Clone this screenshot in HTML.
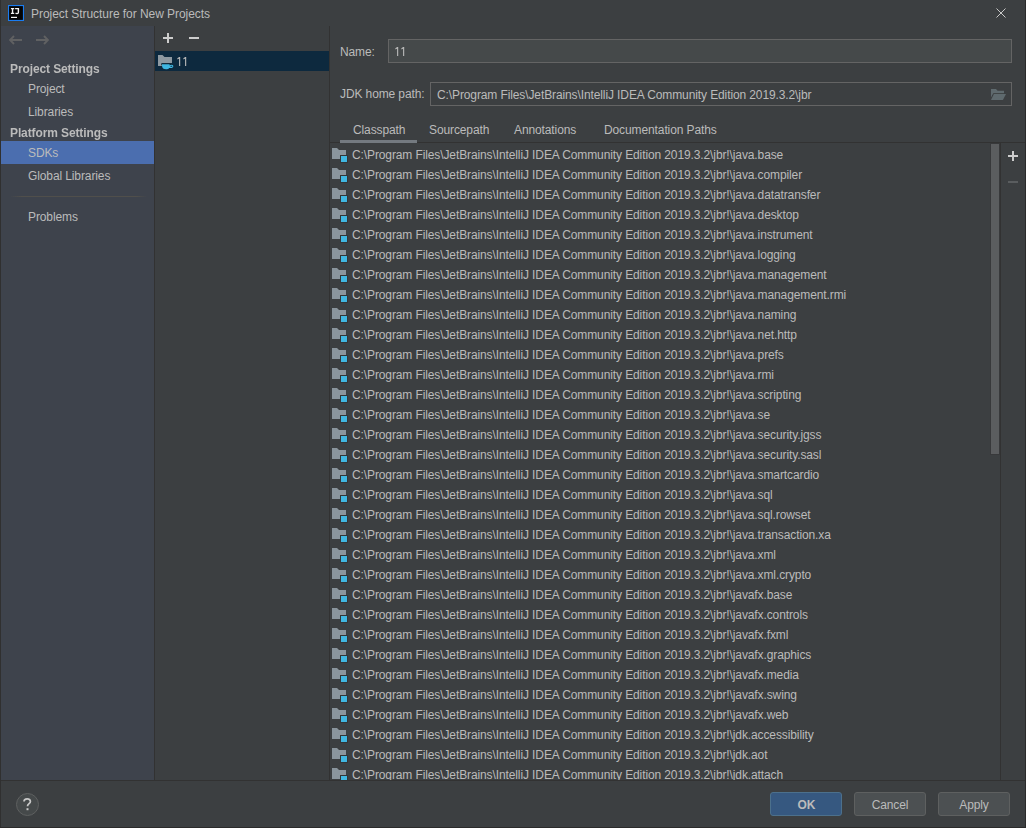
<!DOCTYPE html>
<html><head><meta charset="utf-8"><style>
*{margin:0;padding:0;box-sizing:border-box}
html,body{width:1026px;height:828px;overflow:hidden;background:#3C3F41}
body{position:relative;font-family:"Liberation Sans",sans-serif;font-size:12px;color:#BBBBBB;letter-spacing:-0.11px}
.abs{position:absolute}
.bl{position:absolute;left:0;top:0;width:1px;height:828px;background:#303030}
.br{position:absolute;right:0;top:0;width:1px;height:828px;background:#2B2B2B}
.bb{position:absolute;left:0;bottom:0;width:1026px;height:1px;background:#2B2B2B}
.title{position:absolute;left:31px;top:6px;line-height:16px;font-size:12px;color:#BBBBBB;letter-spacing:-0.05px}
.side{position:absolute;left:1px;top:26px;width:153px;height:754px;background:#3E434C}
.vdiv1{position:absolute;left:154px;top:26px;width:1px;height:754px;background:#323232}
.vdiv2{position:absolute;left:329px;top:26px;width:1px;height:754px;background:#323232}
.hdiv{position:absolute;left:1px;top:780px;width:1024px;height:1px;background:#323232}
.sh{position:absolute;left:10px;font-weight:bold;line-height:16px;will-change:transform}
.si{position:absolute;left:28px;line-height:16px}
.sel{position:absolute;left:1px;top:141px;width:153px;height:23px;background:#4B6EAF}
.sep{position:absolute;left:10px;top:196px;width:137px;height:1px;background:linear-gradient(to right,rgba(80,80,76,0) 0px,#504F4B 12px,#504F4B 126px,rgba(80,80,76,0) 137px)}
.mid-sel{position:absolute;left:155px;top:51px;width:174px;height:20px;background:#0D293E}
.lbl{position:absolute;line-height:16px}
.field{position:absolute;border:1px solid #646464}
.tab{position:absolute;top:122px;line-height:16px}
.list{position:absolute;left:330px;top:143px;width:660px;height:637px;overflow:hidden}
.row{position:absolute;left:0;height:20px;width:660px;white-space:nowrap}
.fi{position:absolute;left:2px;top:4px}
.row .t{position:absolute;left:22px;top:4px;line-height:16px}
.btn{position:absolute;top:792px;width:72px;height:24px;border:1px solid #5E6060;background:#4C5052;border-radius:3px;text-align:center;line-height:22px;padding-top:1px}
</style></head><body>
<div class="bl"></div><div class="br"></div><div class="bb"></div>
<svg class="abs" style="left:8px;top:5px" width="16" height="16" viewBox="0 0 32 32"><rect x="0" y="0" width="32" height="32" fill="#1A7CF0"/><rect x="2.2" y="2.2" width="27.6" height="27.6" fill="#050403"/><path d="M5.8 5.8h6.6v2.6h-1.9v7h1.9v2.6h-6.6v-2.6h1.9v-7h-1.9z" fill="#F4F4F4"/><path d="M14.2 5.8h8v8.8c0 2.6-1.6 3.8-4.1 3.8c-1.7 0-3-.7-3.8-1.6l1.5-1.8c.6.6 1.3 1 2 1c.9 0 1.5-.5 1.5-1.7v-5.9h-5.1z" fill="#F4F4F4"/><rect x="6" y="23.6" width="12" height="2.4" fill="#F4F4F4"/></svg>
<div class="title">Project Structure for New Projects</div>
<svg class="abs" style="left:996px;top:8px" width="10" height="10" viewBox="0 0 10 10"><path d="M0.5 0.5L9.5 9.5M9.5 0.5L0.5 9.5" stroke="#C8C8C8" stroke-width="1"/></svg>

<div class="side"></div>
<div class="vdiv1"></div><div class="vdiv2"></div><div class="hdiv"></div>
<svg class="abs" style="left:9px;top:35px" width="13" height="10" viewBox="0 0 13 10"><path d="M5 1L1 5L5 9M1 5H13" stroke="#606162" stroke-width="1.9" fill="none"/></svg>
<svg class="abs" style="left:36px;top:35px" width="13" height="10" viewBox="0 0 13 10"><path d="M8 1L12 5L8 9M12 5H0" stroke="#606162" stroke-width="1.9" fill="none"/></svg>
<div class="sh" style="top:61px">Project Settings</div>
<div class="si" style="top:81px">Project</div>
<div class="si" style="top:104px">Libraries</div>
<div class="sh" style="top:125px">Platform Settings</div>
<div class="sel"></div>
<div class="si" style="top:145px">SDKs</div>
<div class="si" style="top:168px">Global Libraries</div>
<div class="sep"></div>
<div class="si" style="top:209px">Problems</div>

<div class="abs" style="left:167px;top:33px;width:2px;height:10px;background:#CDCDCD"></div><div class="abs" style="left:163px;top:37px;width:10px;height:2px;background:#CDCDCD"></div>
<div class="abs" style="left:189px;top:37px;width:10px;height:2px;background:#CDCDCD"></div>
<div class="mid-sel"></div>
<svg class="abs" style="left:155px;top:51px" width="40" height="20" viewBox="155 51 40 20"><path d="M158 55h4.5l2 2h7.5v6.3h-10.2v2.7h-3.8z" fill="#8E99A1"/><path d="M161.3 63.3h10.7v1.6h-10.7z" fill="#0A1F2E"/><path d="M162 64.2h7.6v1.2c.4-.5 1.2-.7 2-.6c1.2.1 1.8.8 1.7 1.6c-.1.9-1 1.5-2.2 1.5h-1.9c-.7 1-1.8 1.4-3.1 1.4c-2.4 0-4.1-1.3-4.1-3.6z" fill="#40B6E0"/><ellipse cx="171.3" cy="66.3" rx="1" ry=".5" fill="#0D293E"/><path d="M177.3 58.3L179.2 57.1H180.2V66H179.1V58.6L177.6 59.4z" fill="#BBBBBB"/><path d="M183.3 58.3L185.2 57.1H186.2V66H185.1V58.6L183.6 59.4z" fill="#BBBBBB"/></svg>

<div class="lbl" style="left:340px;top:44px">Name:</div>
<div class="field" style="left:388px;top:39px;width:624px;height:24px;background:#45494A"></div>
<svg class="abs" style="left:390px;top:44px" width="20" height="16" viewBox="390 44 20 16"><path d="M395.3 48.3L397.2 47.1H398.2V56H397.1V48.6L395.6 49.4z" fill="#BBBBBB"/><path d="M401.3 48.3L403.2 47.1H404.2V56H403.1V48.6L401.6 49.4z" fill="#BBBBBB"/></svg>
<div class="lbl" style="left:340px;top:86px">JDK home path:</div>
<div class="field" style="left:430px;top:82px;width:582px;height:24px"></div>
<div class="lbl" style="left:437px;top:87px">C:\Program Files\JetBrains\IntelliJ IDEA Community Edition 2019.3.2\jbr</div>
<svg class="abs" style="left:986px;top:84px" width="24" height="20" viewBox="986 84 24 20"><path d="M991 89H996L997.6 90.7H1004V93.2H993.2L991 97.6Z" fill="#5F6A6E"/><path d="M993.9 94.1H1006L1002.9 100H991Z" fill="#5F6A6E" stroke="#3C3F41" stroke-width="0.9" paint-order="stroke"/></svg>

<div class="tab" style="left:353px">Classpath</div>
<div class="tab" style="left:429px">Sourcepath</div>
<div class="tab" style="left:514px">Annotations</div>
<div class="tab" style="left:604px">Documentation Paths</div>
<div class="abs" style="left:330px;top:142px;width:695px;height:1px;background:#323232"></div>
<div class="abs" style="left:340px;top:140px;width:77px;height:3px;background:#747A80"></div>

<div class="list">
<div class="row" style="top:0px"><svg class="fi" width="16" height="16" viewBox="0 0 16 16"><path d="M0 1h5l2 2h7v5h-6v4h-8z" fill="#8A959D"/><rect x="8" y="8" width="8" height="8" fill="#323436"/><rect x="9" y="9" width="6" height="6" fill="#40B6E0"/></svg><span class="t">C:\Program Files\JetBrains\IntelliJ IDEA Community Edition 2019.3.2\jbr!\java.base</span></div>
<div class="row" style="top:20px"><svg class="fi" width="16" height="16" viewBox="0 0 16 16"><path d="M0 1h5l2 2h7v5h-6v4h-8z" fill="#8A959D"/><rect x="8" y="8" width="8" height="8" fill="#323436"/><rect x="9" y="9" width="6" height="6" fill="#40B6E0"/></svg><span class="t">C:\Program Files\JetBrains\IntelliJ IDEA Community Edition 2019.3.2\jbr!\java.compiler</span></div>
<div class="row" style="top:40px"><svg class="fi" width="16" height="16" viewBox="0 0 16 16"><path d="M0 1h5l2 2h7v5h-6v4h-8z" fill="#8A959D"/><rect x="8" y="8" width="8" height="8" fill="#323436"/><rect x="9" y="9" width="6" height="6" fill="#40B6E0"/></svg><span class="t">C:\Program Files\JetBrains\IntelliJ IDEA Community Edition 2019.3.2\jbr!\java.datatransfer</span></div>
<div class="row" style="top:60px"><svg class="fi" width="16" height="16" viewBox="0 0 16 16"><path d="M0 1h5l2 2h7v5h-6v4h-8z" fill="#8A959D"/><rect x="8" y="8" width="8" height="8" fill="#323436"/><rect x="9" y="9" width="6" height="6" fill="#40B6E0"/></svg><span class="t">C:\Program Files\JetBrains\IntelliJ IDEA Community Edition 2019.3.2\jbr!\java.desktop</span></div>
<div class="row" style="top:80px"><svg class="fi" width="16" height="16" viewBox="0 0 16 16"><path d="M0 1h5l2 2h7v5h-6v4h-8z" fill="#8A959D"/><rect x="8" y="8" width="8" height="8" fill="#323436"/><rect x="9" y="9" width="6" height="6" fill="#40B6E0"/></svg><span class="t">C:\Program Files\JetBrains\IntelliJ IDEA Community Edition 2019.3.2\jbr!\java.instrument</span></div>
<div class="row" style="top:100px"><svg class="fi" width="16" height="16" viewBox="0 0 16 16"><path d="M0 1h5l2 2h7v5h-6v4h-8z" fill="#8A959D"/><rect x="8" y="8" width="8" height="8" fill="#323436"/><rect x="9" y="9" width="6" height="6" fill="#40B6E0"/></svg><span class="t">C:\Program Files\JetBrains\IntelliJ IDEA Community Edition 2019.3.2\jbr!\java.logging</span></div>
<div class="row" style="top:120px"><svg class="fi" width="16" height="16" viewBox="0 0 16 16"><path d="M0 1h5l2 2h7v5h-6v4h-8z" fill="#8A959D"/><rect x="8" y="8" width="8" height="8" fill="#323436"/><rect x="9" y="9" width="6" height="6" fill="#40B6E0"/></svg><span class="t">C:\Program Files\JetBrains\IntelliJ IDEA Community Edition 2019.3.2\jbr!\java.management</span></div>
<div class="row" style="top:140px"><svg class="fi" width="16" height="16" viewBox="0 0 16 16"><path d="M0 1h5l2 2h7v5h-6v4h-8z" fill="#8A959D"/><rect x="8" y="8" width="8" height="8" fill="#323436"/><rect x="9" y="9" width="6" height="6" fill="#40B6E0"/></svg><span class="t">C:\Program Files\JetBrains\IntelliJ IDEA Community Edition 2019.3.2\jbr!\java.management.rmi</span></div>
<div class="row" style="top:160px"><svg class="fi" width="16" height="16" viewBox="0 0 16 16"><path d="M0 1h5l2 2h7v5h-6v4h-8z" fill="#8A959D"/><rect x="8" y="8" width="8" height="8" fill="#323436"/><rect x="9" y="9" width="6" height="6" fill="#40B6E0"/></svg><span class="t">C:\Program Files\JetBrains\IntelliJ IDEA Community Edition 2019.3.2\jbr!\java.naming</span></div>
<div class="row" style="top:180px"><svg class="fi" width="16" height="16" viewBox="0 0 16 16"><path d="M0 1h5l2 2h7v5h-6v4h-8z" fill="#8A959D"/><rect x="8" y="8" width="8" height="8" fill="#323436"/><rect x="9" y="9" width="6" height="6" fill="#40B6E0"/></svg><span class="t">C:\Program Files\JetBrains\IntelliJ IDEA Community Edition 2019.3.2\jbr!\java.net.http</span></div>
<div class="row" style="top:200px"><svg class="fi" width="16" height="16" viewBox="0 0 16 16"><path d="M0 1h5l2 2h7v5h-6v4h-8z" fill="#8A959D"/><rect x="8" y="8" width="8" height="8" fill="#323436"/><rect x="9" y="9" width="6" height="6" fill="#40B6E0"/></svg><span class="t">C:\Program Files\JetBrains\IntelliJ IDEA Community Edition 2019.3.2\jbr!\java.prefs</span></div>
<div class="row" style="top:220px"><svg class="fi" width="16" height="16" viewBox="0 0 16 16"><path d="M0 1h5l2 2h7v5h-6v4h-8z" fill="#8A959D"/><rect x="8" y="8" width="8" height="8" fill="#323436"/><rect x="9" y="9" width="6" height="6" fill="#40B6E0"/></svg><span class="t">C:\Program Files\JetBrains\IntelliJ IDEA Community Edition 2019.3.2\jbr!\java.rmi</span></div>
<div class="row" style="top:240px"><svg class="fi" width="16" height="16" viewBox="0 0 16 16"><path d="M0 1h5l2 2h7v5h-6v4h-8z" fill="#8A959D"/><rect x="8" y="8" width="8" height="8" fill="#323436"/><rect x="9" y="9" width="6" height="6" fill="#40B6E0"/></svg><span class="t">C:\Program Files\JetBrains\IntelliJ IDEA Community Edition 2019.3.2\jbr!\java.scripting</span></div>
<div class="row" style="top:260px"><svg class="fi" width="16" height="16" viewBox="0 0 16 16"><path d="M0 1h5l2 2h7v5h-6v4h-8z" fill="#8A959D"/><rect x="8" y="8" width="8" height="8" fill="#323436"/><rect x="9" y="9" width="6" height="6" fill="#40B6E0"/></svg><span class="t">C:\Program Files\JetBrains\IntelliJ IDEA Community Edition 2019.3.2\jbr!\java.se</span></div>
<div class="row" style="top:280px"><svg class="fi" width="16" height="16" viewBox="0 0 16 16"><path d="M0 1h5l2 2h7v5h-6v4h-8z" fill="#8A959D"/><rect x="8" y="8" width="8" height="8" fill="#323436"/><rect x="9" y="9" width="6" height="6" fill="#40B6E0"/></svg><span class="t">C:\Program Files\JetBrains\IntelliJ IDEA Community Edition 2019.3.2\jbr!\java.security.jgss</span></div>
<div class="row" style="top:300px"><svg class="fi" width="16" height="16" viewBox="0 0 16 16"><path d="M0 1h5l2 2h7v5h-6v4h-8z" fill="#8A959D"/><rect x="8" y="8" width="8" height="8" fill="#323436"/><rect x="9" y="9" width="6" height="6" fill="#40B6E0"/></svg><span class="t">C:\Program Files\JetBrains\IntelliJ IDEA Community Edition 2019.3.2\jbr!\java.security.sasl</span></div>
<div class="row" style="top:320px"><svg class="fi" width="16" height="16" viewBox="0 0 16 16"><path d="M0 1h5l2 2h7v5h-6v4h-8z" fill="#8A959D"/><rect x="8" y="8" width="8" height="8" fill="#323436"/><rect x="9" y="9" width="6" height="6" fill="#40B6E0"/></svg><span class="t">C:\Program Files\JetBrains\IntelliJ IDEA Community Edition 2019.3.2\jbr!\java.smartcardio</span></div>
<div class="row" style="top:340px"><svg class="fi" width="16" height="16" viewBox="0 0 16 16"><path d="M0 1h5l2 2h7v5h-6v4h-8z" fill="#8A959D"/><rect x="8" y="8" width="8" height="8" fill="#323436"/><rect x="9" y="9" width="6" height="6" fill="#40B6E0"/></svg><span class="t">C:\Program Files\JetBrains\IntelliJ IDEA Community Edition 2019.3.2\jbr!\java.sql</span></div>
<div class="row" style="top:360px"><svg class="fi" width="16" height="16" viewBox="0 0 16 16"><path d="M0 1h5l2 2h7v5h-6v4h-8z" fill="#8A959D"/><rect x="8" y="8" width="8" height="8" fill="#323436"/><rect x="9" y="9" width="6" height="6" fill="#40B6E0"/></svg><span class="t">C:\Program Files\JetBrains\IntelliJ IDEA Community Edition 2019.3.2\jbr!\java.sql.rowset</span></div>
<div class="row" style="top:380px"><svg class="fi" width="16" height="16" viewBox="0 0 16 16"><path d="M0 1h5l2 2h7v5h-6v4h-8z" fill="#8A959D"/><rect x="8" y="8" width="8" height="8" fill="#323436"/><rect x="9" y="9" width="6" height="6" fill="#40B6E0"/></svg><span class="t">C:\Program Files\JetBrains\IntelliJ IDEA Community Edition 2019.3.2\jbr!\java.transaction.xa</span></div>
<div class="row" style="top:400px"><svg class="fi" width="16" height="16" viewBox="0 0 16 16"><path d="M0 1h5l2 2h7v5h-6v4h-8z" fill="#8A959D"/><rect x="8" y="8" width="8" height="8" fill="#323436"/><rect x="9" y="9" width="6" height="6" fill="#40B6E0"/></svg><span class="t">C:\Program Files\JetBrains\IntelliJ IDEA Community Edition 2019.3.2\jbr!\java.xml</span></div>
<div class="row" style="top:420px"><svg class="fi" width="16" height="16" viewBox="0 0 16 16"><path d="M0 1h5l2 2h7v5h-6v4h-8z" fill="#8A959D"/><rect x="8" y="8" width="8" height="8" fill="#323436"/><rect x="9" y="9" width="6" height="6" fill="#40B6E0"/></svg><span class="t">C:\Program Files\JetBrains\IntelliJ IDEA Community Edition 2019.3.2\jbr!\java.xml.crypto</span></div>
<div class="row" style="top:440px"><svg class="fi" width="16" height="16" viewBox="0 0 16 16"><path d="M0 1h5l2 2h7v5h-6v4h-8z" fill="#8A959D"/><rect x="8" y="8" width="8" height="8" fill="#323436"/><rect x="9" y="9" width="6" height="6" fill="#40B6E0"/></svg><span class="t">C:\Program Files\JetBrains\IntelliJ IDEA Community Edition 2019.3.2\jbr!\javafx.base</span></div>
<div class="row" style="top:460px"><svg class="fi" width="16" height="16" viewBox="0 0 16 16"><path d="M0 1h5l2 2h7v5h-6v4h-8z" fill="#8A959D"/><rect x="8" y="8" width="8" height="8" fill="#323436"/><rect x="9" y="9" width="6" height="6" fill="#40B6E0"/></svg><span class="t">C:\Program Files\JetBrains\IntelliJ IDEA Community Edition 2019.3.2\jbr!\javafx.controls</span></div>
<div class="row" style="top:480px"><svg class="fi" width="16" height="16" viewBox="0 0 16 16"><path d="M0 1h5l2 2h7v5h-6v4h-8z" fill="#8A959D"/><rect x="8" y="8" width="8" height="8" fill="#323436"/><rect x="9" y="9" width="6" height="6" fill="#40B6E0"/></svg><span class="t">C:\Program Files\JetBrains\IntelliJ IDEA Community Edition 2019.3.2\jbr!\javafx.fxml</span></div>
<div class="row" style="top:500px"><svg class="fi" width="16" height="16" viewBox="0 0 16 16"><path d="M0 1h5l2 2h7v5h-6v4h-8z" fill="#8A959D"/><rect x="8" y="8" width="8" height="8" fill="#323436"/><rect x="9" y="9" width="6" height="6" fill="#40B6E0"/></svg><span class="t">C:\Program Files\JetBrains\IntelliJ IDEA Community Edition 2019.3.2\jbr!\javafx.graphics</span></div>
<div class="row" style="top:520px"><svg class="fi" width="16" height="16" viewBox="0 0 16 16"><path d="M0 1h5l2 2h7v5h-6v4h-8z" fill="#8A959D"/><rect x="8" y="8" width="8" height="8" fill="#323436"/><rect x="9" y="9" width="6" height="6" fill="#40B6E0"/></svg><span class="t">C:\Program Files\JetBrains\IntelliJ IDEA Community Edition 2019.3.2\jbr!\javafx.media</span></div>
<div class="row" style="top:540px"><svg class="fi" width="16" height="16" viewBox="0 0 16 16"><path d="M0 1h5l2 2h7v5h-6v4h-8z" fill="#8A959D"/><rect x="8" y="8" width="8" height="8" fill="#323436"/><rect x="9" y="9" width="6" height="6" fill="#40B6E0"/></svg><span class="t">C:\Program Files\JetBrains\IntelliJ IDEA Community Edition 2019.3.2\jbr!\javafx.swing</span></div>
<div class="row" style="top:560px"><svg class="fi" width="16" height="16" viewBox="0 0 16 16"><path d="M0 1h5l2 2h7v5h-6v4h-8z" fill="#8A959D"/><rect x="8" y="8" width="8" height="8" fill="#323436"/><rect x="9" y="9" width="6" height="6" fill="#40B6E0"/></svg><span class="t">C:\Program Files\JetBrains\IntelliJ IDEA Community Edition 2019.3.2\jbr!\javafx.web</span></div>
<div class="row" style="top:580px"><svg class="fi" width="16" height="16" viewBox="0 0 16 16"><path d="M0 1h5l2 2h7v5h-6v4h-8z" fill="#8A959D"/><rect x="8" y="8" width="8" height="8" fill="#323436"/><rect x="9" y="9" width="6" height="6" fill="#40B6E0"/></svg><span class="t">C:\Program Files\JetBrains\IntelliJ IDEA Community Edition 2019.3.2\jbr!\jdk.accessibility</span></div>
<div class="row" style="top:600px"><svg class="fi" width="16" height="16" viewBox="0 0 16 16"><path d="M0 1h5l2 2h7v5h-6v4h-8z" fill="#8A959D"/><rect x="8" y="8" width="8" height="8" fill="#323436"/><rect x="9" y="9" width="6" height="6" fill="#40B6E0"/></svg><span class="t">C:\Program Files\JetBrains\IntelliJ IDEA Community Edition 2019.3.2\jbr!\jdk.aot</span></div>
<div class="row" style="top:620px"><svg class="fi" width="16" height="16" viewBox="0 0 16 16"><path d="M0 1h5l2 2h7v5h-6v4h-8z" fill="#8A959D"/><rect x="8" y="8" width="8" height="8" fill="#323436"/><rect x="9" y="9" width="6" height="6" fill="#40B6E0"/></svg><span class="t">C:\Program Files\JetBrains\IntelliJ IDEA Community Edition 2019.3.2\jbr!\jdk.attach</span></div>
</div>
<div class="abs" style="left:990px;top:143px;width:10px;height:312px;background:#38393B"></div><div class="abs" style="left:991px;top:144px;width:8px;height:310px;background:#5B5D5F"></div>
<div class="abs" style="left:1000px;top:143px;width:1px;height:637px;background:#323232"></div>
<div class="abs" style="left:1012px;top:151px;width:2px;height:10px;background:#CDCDCD"></div><div class="abs" style="left:1008px;top:155px;width:10px;height:2px;background:#CDCDCD"></div>
<svg class="abs" style="left:1008px;top:181px" width="10" height="2" viewBox="0 0 10 2"><path d="M0 1H10" stroke="#5A5D5F" stroke-width="2"/></svg>

<svg class="abs" style="left:15px;top:792px" width="25" height="25" viewBox="15 792 25 25"><circle cx="27.5" cy="804.5" r="11" fill="#45494A" stroke="#5E6060" stroke-width="1"/><path d="M24 801.6C24 799.6 25.4 798.8 27.2 798.8C29.1 798.8 30.4 799.9 30.4 801.5C30.4 803.6 27.5 803.7 27.5 806.2" fill="none" stroke="#C8C8C8" stroke-width="1.7"/><rect x="26.5" y="808.2" width="2" height="2" fill="#C8C8C8"/></svg>
<div class="btn" style="left:770px;background:#365880;border-color:#4C708C;font-weight:bold;padding-left:1px">OK</div>
<div class="btn" style="left:854px">Cancel</div>
<div class="btn" style="left:938px">Apply</div>
</body></html>
